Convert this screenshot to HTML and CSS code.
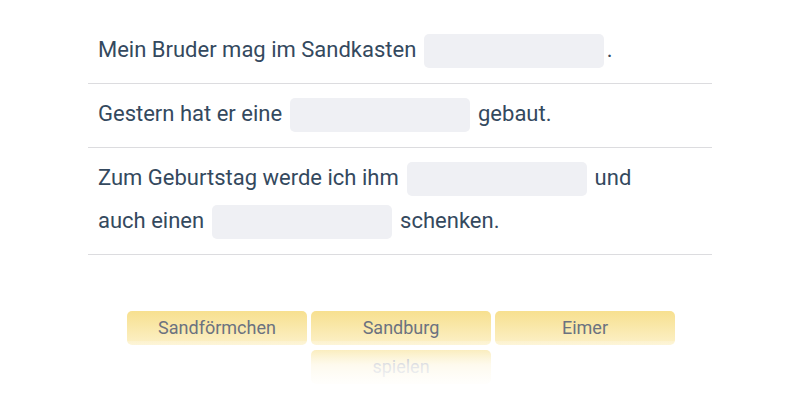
FILE: index.html
```html
<!DOCTYPE html>
<html lang="de">
<head>
<meta charset="utf-8">
<link rel="stylesheet" href="styles.css">
</head>
<body>
<main class="exercise">
  <div class="sentences">
    <div class="row"><p class="line">Mein Bruder mag im Sandkasten <span class="blank"></span>.</p></div>
    <div class="row"><p class="line">Gestern hat er eine <span class="blank"></span> gebaut.</p></div>
    <div class="row"><p class="line">Zum Geburtstag werde ich ihm <span class="blank"></span> und<br>auch einen <span class="blank"></span> schenken.</p></div>
  </div>
  <div class="options">
    <div class="option">Sandförmchen</div>
    <div class="option">Sandburg</div>
    <div class="option">Eimer</div>
    <div class="option">spielen</div>
    <div class="fade"></div>
  </div>
</main>
</body>
</html>
```
FILE: styles.css
```css
html, body {
  margin: 0;
  padding: 0;
  background: #ffffff;
}
body {
  font-family: Roboto, "Liberation Sans", sans-serif;
  color: #34495e;
  width: 800px;
  height: 400px;
  overflow: hidden;
}
.exercise {
  width: 624px;
  margin: 0 auto;
  padding-top: 20px;
}
.row {
  border-bottom: 1px solid #dcdcdf;
  padding: 8px 10px 12px;
}
.line {
  margin: 0;
  font-size: 22px;
  line-height: 43px;
}
.blank {
  display: inline-block;
  width: 180px;
  height: 34px;
  margin: 0 2.5px;
  vertical-align: middle;
  background: #eff0f4;
  border-radius: 5px;
}
.options {
  position: relative;
  margin-top: 56px;
  display: flex;
  flex-wrap: wrap;
  justify-content: center;
  gap: 5px 4px;
  width: 560px;
  margin-left: auto;
  margin-right: auto;
  padding-left: 2px;
}
.option {
  width: 180px;
  height: 34px;
  box-sizing: border-box;
  border-radius: 5px;
  background: linear-gradient(#f7e08f, #fcf1c8);
  color: #6b7280;
  font-size: 18px;
  line-height: 34px;
  text-align: center;
}
.fade {
  position: absolute;
  left: 0;
  right: 0;
  top: 30px;
  height: 60px;
  background: linear-gradient(rgba(255,255,255,0.2), rgba(255,255,255,0.8) 40%, #ffffff 80%);
}
```
